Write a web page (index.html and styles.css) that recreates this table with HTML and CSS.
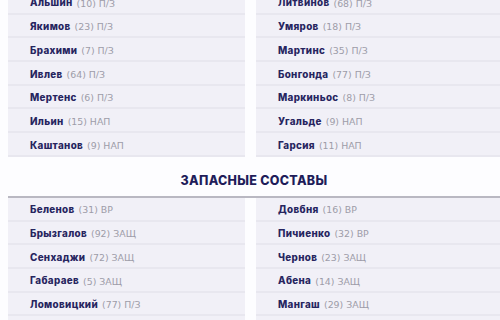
FILE: index.html
```html
<!DOCTYPE html>
<html lang="ru">
<head>
<meta charset="utf-8">
<link rel="stylesheet" href="styles.css">
</head>
<body>
<div class="page">
  <section class="lineup first">
    <ul class="col">
      <li class="row"><b>Альшин</b> <span>(10) П/З</span></li>
      <li class="row"><b>Якимов</b> <span>(23) П/З</span></li>
      <li class="row"><b>Брахими</b> <span>(7) П/З</span></li>
      <li class="row"><b>Ивлев</b> <span>(64) П/З</span></li>
      <li class="row"><b>Мертенс</b> <span>(6) П/З</span></li>
      <li class="row"><b>Ильин</b> <span>(15) НАП</span></li>
      <li class="row"><b>Каштанов</b> <span>(9) НАП</span></li>
    </ul>
    <ul class="col">
      <li class="row"><b>Литвинов</b> <span>(68) П/З</span></li>
      <li class="row"><b>Умяров</b> <span>(18) П/З</span></li>
      <li class="row"><b>Мартинс</b> <span>(35) П/З</span></li>
      <li class="row"><b>Бонгонда</b> <span>(77) П/З</span></li>
      <li class="row"><b>Маркиньос</b> <span>(8) П/З</span></li>
      <li class="row"><b>Угальде</b> <span>(9) НАП</span></li>
      <li class="row"><b>Гарсия</b> <span>(11) НАП</span></li>
    </ul>
  </section>
  <h2 class="title">ЗАПАСНЫЕ СОСТАВЫ</h2>
  <section class="lineup subs">
    <ul class="col">
      <li class="row"><b>Беленов</b> <span>(31) ВР</span></li>
      <li class="row"><b>Брызгалов</b> <span>(92) ЗАЩ</span></li>
      <li class="row"><b>Сенхаджи</b> <span>(72) ЗАЩ</span></li>
      <li class="row"><b>Габараев</b> <span>(5) ЗАЩ</span></li>
      <li class="row"><b>Ломовицкий</b> <span>(77) П/З</span></li>
      <li class="row"></li>
    </ul>
    <ul class="col">
      <li class="row"><b>Довбня</b> <span>(16) ВР</span></li>
      <li class="row"><b>Пичиенко</b> <span>(32) ВР</span></li>
      <li class="row"><b>Чернов</b> <span>(23) ЗАЩ</span></li>
      <li class="row"><b>Абена</b> <span>(14) ЗАЩ</span></li>
      <li class="row"><b>Мангаш</b> <span>(29) ЗАЩ</span></li>
      <li class="row"></li>
    </ul>
  </section>
</div>
</body>
</html>
```
FILE: styles.css
```css
html, body {
  margin: 0;
  padding: 0;
  background: #fdfdff;
  overflow: hidden;
}
body {
  width: 500px;
  height: 320px;
  font-family: Inter, "Noto Sans", sans-serif;
}
.page {
  padding-left: 8px;
  margin-top: -9px;
}
.lineup {
  display: grid;
  grid-template-columns: 237px 1fr;
  column-gap: 11px;
}
.subs {
  border-top: 2px solid #b9b8c2;
}
.col {
  list-style: none;
  margin: 0;
  padding: 0;
}
.row {
  height: 21.7px;
  box-sizing: content-box;
  border-bottom: 2px solid #e8e7ef;
  background: #f1f0f7;
  padding-left: 22px;
  display: flex;
  align-items: center;
  white-space: pre;
  line-height: 1;
}
.row b {
  font-family: Inter, "Noto Sans", sans-serif;
  font-size: 9.8px;
  font-weight: 800;
  letter-spacing: 0.35px;
  color: #27255f;
  padding-top: 3px;
}
.row span {
  font-family: "DejaVu Sans", sans-serif;
  font-size: 9.4px;
  color: #9d9ca8;
  margin-left: 4px;
  padding-top: 3px;
}
.title {
  margin: 0;
  height: 39px;
  padding-top: 9px;
  box-sizing: border-box;
  display: flex;
  align-items: center;
  justify-content: center;
  font-size: 12.5px;
  font-weight: 800;
  color: #1f1d5a;
  letter-spacing: 0.3px;
}
```
